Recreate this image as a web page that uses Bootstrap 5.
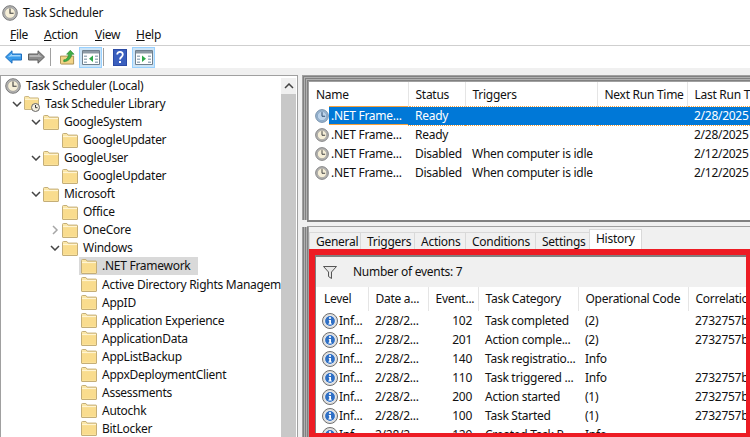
<!doctype html>
<html lang="en"><head><meta charset="utf-8"><title>Task Scheduler</title>
<link rel="stylesheet" href="https://cdn.jsdelivr.net/npm/bootstrap@5.3.0/dist/css/bootstrap.min.css">
<style>
html,body{height:437px;width:750px;overflow:hidden;margin:0}
body{font:12px/18px "Noto Sans","Open Sans",sans-serif;letter-spacing:-.27px;color:#111;background:#fff}
.ttl{height:23px;padding:2px 0 0 2px;gap:5px}
.mnu{height:23px;padding:2px 0 0 10px;border-bottom:1px solid #cfcfcf}
.mi1{width:34px}.mi2{width:51px}.mi3{width:41px}
.tbar{height:22px;padding-left:5px;background:#fff}
.tfwd{margin-left:6px}.ts1{margin-left:5px}.tup{margin-left:9px}.tb1{margin-left:4px}.ts2{margin-left:1px}.thelp{margin-left:9px}.tb2{margin-left:5px}
.tbtn{width:23px;height:21px;background:#cce4f7;border:1px solid #99d1ff}
.tsep{width:1px;height:18px;background:#a0a0a0}
.band{height:7px;background:#f0f0f0}
.mainrow{height:362px;background:#f0f0f0}
.tree{width:298px;height:362px;border:1px solid #a0a0a0;border-width:1px 1px 0 1px;background:#fff}
.treebody{width:280px;overflow:hidden;height:361px;padding-top:1px}
.tr{height:18.05px;white-space:nowrap}
.tr svg{flex:none}
.chev{width:10px;flex:none;margin-right:2px}
.l0{padding-left:4px}.l1{padding-left:11px}.l2{padding-left:30px}.l3{padding-left:49px}.l3n{padding-left:61px}.l4{padding-left:80px}
.lbl{padding-left:5px}
.sel{background:#d9d9d9;margin-left:-2px;padding:0 7px 0 2px;display:flex;align-items:center;height:18px}
.sbar{width:15px;background:#c8c8c8;margin-top:2px;height:360px}
.sup{height:16px;background:#f0f0f0}
.rpane{margin-left:4px;flex:1;min-width:0;height:362px}
.stripes{box-shadow:inset 1px 1px 0 #a0a0a0,inset 2px 2px 0 #808080,inset 3px 3px 0 #b0b0b0,inset 4px 4px 0 #808080,inset 5px 5px 0 #b0b0b0,inset 6px 6px 0 #808080,inset 7px 7px 0 #a0a0a0}
.up{height:145px;padding:7px 0 0 7px;background:#fff;overflow:hidden}
.split{height:7px;background:#f0f0f0;border-top:2px solid #808080;border-bottom:1px solid #a0a0a0;margin-left:5px}
.low{height:210px;padding:0 0 0 7px;background-color:#f0f0f0}
.stripesv{box-shadow:inset 1px 0 0 #a0a0a0,inset 2px 0 0 #808080,inset 3px 0 0 #b0b0b0,inset 4px 0 0 #808080,inset 5px 0 0 #b0b0b0,inset 6px 0 0 #808080,inset 7px 0 0 #a0a0a0}
.tabsx{height:22px;padding-left:1px;border:0;align-items:flex-end;flex-wrap:nowrap}
.tabx{height:17px;border:1px solid #d9d9d9;border-bottom:0;line-height:17px;padding-left:6px;background:#f0f0f0;margin-left:-1px;flex:none;overflow:hidden;white-space:nowrap}
.tabx.on{height:20px;background:#fff;line-height:17px}
.tw1{width:52px}.tw2{width:55px}.tw3{width:52px}.tw4{width:71px}.tw5{width:55px}.tw6{width:53px}
.redbox{border:solid #ed1c24;border-width:6px 4px 4px 6px;height:188px;overflow:hidden;background:#fff}
.fbar{height:32px;background:#f0f0f0;border-top:2px solid #808080;border-left:1px solid #808080;padding-left:7px}
.flt{margin-right:16px}
.lv{table-layout:fixed;border-collapse:collapse;margin:0;--bs-table-bg:transparent}
.lv1{width:441px}.lv2{width:432px}
.lv td,.lv th{padding:0;font-weight:400;white-space:nowrap;overflow:hidden;border:0;color:#111;vertical-align:middle;box-shadow:none}
.up .lv th{height:24px;line-height:16px;padding:2px 0 0 7px;border-right:1px solid #e5e5e5}
.up .lv td{height:19px;line-height:16px;padding:0 0 0 7px}
.up .lv tr.hi td:not(:first-child){background:#0078d7;color:#fff;border-top:1px dotted #f7a13c;border-bottom:1px dotted #f7a13c}
.up .lv td:first-child{padding:0 0 0 6px}
.up .lv tr.hi td:nth-child(1) .nm{background:#0078d7;color:#fff;box-shadow:0 1px 0 #f7a13c,0 -1px 0 #f7a13c}
.nm{display:flex;align-items:center;height:17px;padding:0 0 0 2px;flex:1}
.nmw{display:flex;align-items:center}
.low .lv th{height:24px;padding-left:7px;border-right:1px solid #e5e5e5}
.low .lv th:first-child{padding-left:8px}
.low .lv td{height:19px;padding-left:7px}
.low .lv td:first-child{padding-left:0}
.lvw{border-left:1px solid #808080;height:146px;overflow:hidden}
.inf{display:flex;align-items:center;padding-left:6px;gap:1px}
.num{text-align:right;padding-right:6px!important}
</style></head><body class="d-flex flex-column">
<svg width="0" height="0" class="position-absolute">
<defs>
<symbol id="clk" viewBox="0 0 16 16"><circle cx="8" cy="8" r="7.3" fill="#b5b5b5" stroke="#6f6f6f" stroke-width=".9"/><circle cx="8" cy="8" r="5.3" fill="#f6efd8" stroke="#8d8d8d" stroke-width=".6"/><path d="M8 3.6V8.3H11.6" fill="none" stroke="#3c3c3c" stroke-width="1.1"/></symbol>
<symbol id="clkb" viewBox="0 0 16 16"><circle cx="8" cy="8" r="7.3" fill="#9db8d2" stroke="#5f7d9c" stroke-width=".9"/><circle cx="8" cy="8" r="5.3" fill="#bcd3ea" stroke="#6f8fb0" stroke-width=".6"/><path d="M8 3.6V8.3H11.6" fill="none" stroke="#2a4a6c" stroke-width="1.1"/></symbol>
<symbol id="fld" viewBox="0 0 16 15"><path d="M.5 3V1.5a1 1 0 0 1 1-1h3.4l1.2 1.6H15a.5.5 0 0 1 .5.5v11.4a.5.5 0 0 1-.5.5H1a.5.5 0 0 1-.5-.5Z" fill="#fbe7a8" stroke="#c4ae78"/><path d="M1 4H15V13.5H1Z" fill="#f9dc8e"/><path d="M1 3.6H15" stroke="#fff6d8"/></symbol>
<symbol id="inf" viewBox="0 0 16 16"><circle cx="8" cy="8" r="7.5" fill="#ececec" stroke="#4a4a4a" stroke-width=".8"/><circle cx="8" cy="8" r="6.2" fill="#fafafa" stroke="#b8b8b8" stroke-width=".6"/><circle cx="8" cy="8" r="4.9" fill="#2f6fc4"/><circle cx="8" cy="5" r="1.1" fill="#fff"/><path d="M6.8 7H9V10.6H9.8V11.6H6.4V10.6H7.2V8H6.8Z" fill="#fff"/></symbol>
<symbol id="dn" viewBox="0 0 10 6"><path d="M1 1 5 5 9 1" fill="none" stroke="#444" stroke-width="1.5"/></symbol>
</defs></svg>

<div class="ttl d-flex align-items-center"><svg width="16" height="16"><use href="#clk"/></svg><span>Task Scheduler</span></div>
<div class="mnu d-flex align-items-center"><span class="mi1"><u>F</u>ile</span><span class="mi2"><u>A</u>ction</span><span class="mi3"><u>V</u>iew</span><span><u>H</u>elp</span></div>
<div class="tbar d-flex align-items-center">
<svg width="17" height="14" viewBox="0 0 17 14"><path d="M.5 7 7 .8V4H16.5V10H7V13.2Z" fill="#3a9bea" stroke="#1c6fc0"/><path d="M3 7 7 3.5V5H15.5V6.5H6.5Z" fill="#9fd4fb"/></svg>
<svg width="17" height="14" viewBox="0 0 17 14" class="tfwd"><path d="M16.5 7 10 .8V4H.5V10H10V13.2Z" fill="#8c8c8c" stroke="#5f5f5f"/><path d="M1.5 5H10V3.5L14 7H1.5Z" fill="#b5b5b5"/></svg>
<span class="tsep ts1"></span>
<svg width="15" height="17" viewBox="0 0 16 17" class="tup"><path d="M.5 7H14.5V15.5H1.5L.5 15Z" fill="#f2d486" stroke="#a98f52"/><path d="M4 11C7 11 9 8 9 5H7L11 .8 15 5H12.6C12 9 9 13 4 13Z" fill="#3fae45" stroke="#26812c" stroke-width=".6"/></svg>
<span class="tbtn d-flex align-items-center justify-content-center tb1"><svg width="18" height="15" viewBox="0 0 18 15"><path d="M.5.5H17.5V14.5H.5Z" fill="#fff" stroke="#6f7f8c"/><path d="M1 1H17V3.5H1Z" fill="#8d9aa5"/><path d="M2 5.5H5V7H2ZM2 8.5H5V10H2ZM2 11.5H5V13H2ZM13 5.5H16V7H13ZM13 8.5H16V10H13ZM13 11.5H16V13H13Z" fill="#9fb1bf"/><path d="M11 5.5V12L7 8.7Z" fill="#2fa84a"/></svg></span>
<span class="tsep ts2"></span>
<svg width="14" height="17" viewBox="0 0 14 17" class="thelp"><path d="M0 0H14V17H0Z" fill="#2b4aa5"/><path d="M1 1H13V16H1Z" fill="#3a5fbe"/><path d="M4.2 5.5C4.2 2 9.8 2 9.8 5.5 9.8 8 7 8 7 10.5" fill="none" stroke="#fff" stroke-width="1.8"/><path d="M6 12H8V14H6Z" fill="#fff"/></svg>
<span class="tbtn d-flex align-items-center justify-content-center tb2"><svg width="18" height="15" viewBox="0 0 18 15"><path d="M.5.5H17.5V14.5H.5Z" fill="#fff" stroke="#6f7f8c"/><path d="M1 1H17V3.5H1Z" fill="#8d9aa5"/><path d="M2 5.5H5V7H2ZM2 8.5H5V10H2ZM2 11.5H5V13H2ZM13 5.5H16V7H13ZM13 8.5H16V10H13ZM13 11.5H16V13H13Z" fill="#9fb1bf"/><path d="M7 5.5V12L11 8.7Z" fill="#2fa84a"/></svg></span>
</div>
<div class="band"></div>
<div class="mainrow d-flex">
<div class="tree d-flex">
<div class="treebody">
<div class="tr d-flex align-items-center l0"><svg width="16" height="16"><use href="#clk"/></svg><span class="lbl">Task Scheduler (Local)</span></div>
<div class="tr d-flex align-items-center l1"><svg class="chev" width="10" height="6"><use href="#dn"/></svg><svg width="16" height="16" viewBox="0 0 16 16"><use href="#fld" width="15" height="14"/><circle cx="11.5" cy="11.5" r="4" fill="#f4efe0" stroke="#666"/><path d="M11.5 9V11.7H13.5" fill="none" stroke="#333"/></svg><span class="lbl">Task Scheduler Library</span></div>
<div class="tr d-flex align-items-center l2"><svg class="chev" width="10" height="6"><use href="#dn"/></svg><svg width="16" height="15"><use href="#fld"/></svg><span class="lbl">GoogleSystem</span></div>
<div class="tr d-flex align-items-center l3n"><svg width="16" height="15"><use href="#fld"/></svg><span class="lbl">GoogleUpdater</span></div>
<div class="tr d-flex align-items-center l2"><svg class="chev" width="10" height="6"><use href="#dn"/></svg><svg width="16" height="15"><use href="#fld"/></svg><span class="lbl">GoogleUser</span></div>
<div class="tr d-flex align-items-center l3n"><svg width="16" height="15"><use href="#fld"/></svg><span class="lbl">GoogleUpdater</span></div>
<div class="tr d-flex align-items-center l2"><svg class="chev" width="10" height="6"><use href="#dn"/></svg><svg width="16" height="15"><use href="#fld"/></svg><span class="lbl">Microsoft</span></div>
<div class="tr d-flex align-items-center l3n"><svg width="16" height="15"><use href="#fld"/></svg><span class="lbl">Office</span></div>
<div class="tr d-flex align-items-center l3"><svg class="chev" width="10" height="10" viewBox="0 0 10 10"><path d="M3 1 7 5 3 9" fill="none" stroke="#a6a6a6" stroke-width="1.5"/></svg><svg width="16" height="15"><use href="#fld"/></svg><span class="lbl">OneCore</span></div>
<div class="tr d-flex align-items-center l3"><svg class="chev" width="10" height="6"><use href="#dn"/></svg><svg width="16" height="15"><use href="#fld"/></svg><span class="lbl">Windows</span></div>
<div class="tr d-flex align-items-center l4"><span class="sel"><svg width="16" height="15"><use href="#fld"/></svg><span class="lbl">.NET Framework</span></span></div>
<div class="tr d-flex align-items-center l4"><svg width="16" height="15"><use href="#fld"/></svg><span class="lbl">Active Directory Rights Managem</span></div>
<div class="tr d-flex align-items-center l4"><svg width="16" height="15"><use href="#fld"/></svg><span class="lbl">AppID</span></div>
<div class="tr d-flex align-items-center l4"><svg width="16" height="15"><use href="#fld"/></svg><span class="lbl">Application Experience</span></div>
<div class="tr d-flex align-items-center l4"><svg width="16" height="15"><use href="#fld"/></svg><span class="lbl">ApplicationData</span></div>
<div class="tr d-flex align-items-center l4"><svg width="16" height="15"><use href="#fld"/></svg><span class="lbl">AppListBackup</span></div>
<div class="tr d-flex align-items-center l4"><svg width="16" height="15"><use href="#fld"/></svg><span class="lbl">AppxDeploymentClient</span></div>
<div class="tr d-flex align-items-center l4"><svg width="16" height="15"><use href="#fld"/></svg><span class="lbl">Assessments</span></div>
<div class="tr d-flex align-items-center l4"><svg width="16" height="15"><use href="#fld"/></svg><span class="lbl">Autochk</span></div>
<div class="tr d-flex align-items-center l4"><svg width="16" height="15"><use href="#fld"/></svg><span class="lbl">BitLocker</span></div>
</div>
<div class="sbar"><div class="sup d-flex align-items-center justify-content-center"><svg width="10" height="6" viewBox="0 0 10 6"><path d="M1 5 5 1 9 5" fill="none" stroke="#444" stroke-width="1.5"/></svg></div></div>
</div>
<div class="rpane d-flex flex-column">
<div class="up stripes">
<table class="table lv lv1">
<colgroup><col style="width:99px"><col style="width:57px"><col style="width:132px"><col style="width:90px"><col style="width:63px"></colgroup>
<thead><tr><th>Name</th><th>Status</th><th>Triggers</th><th>Next Run Time</th><th>Last Run Ti</th></tr></thead>
<tbody>
<tr class="hi"><td><span class="nmw"><svg width="14" height="14"><use href="#clkb"/></svg><span class="nm">.NET Frame...</span></span></td><td>Ready</td><td></td><td></td><td>2/28/2025 7</td></tr>
<tr><td><span class="nmw"><svg width="14" height="14"><use href="#clk"/></svg><span class="nm">.NET Frame...</span></span></td><td>Ready</td><td></td><td></td><td>2/28/2025 7</td></tr>
<tr><td><span class="nmw"><svg width="14" height="14"><use href="#clk"/></svg><span class="nm">.NET Frame...</span></span></td><td>Disabled</td><td>When computer is idle</td><td></td><td>2/12/2025 9</td></tr>
<tr><td><span class="nmw"><svg width="14" height="14"><use href="#clk"/></svg><span class="nm">.NET Frame...</span></span></td><td>Disabled</td><td>When computer is idle</td><td></td><td>2/12/2025 9</td></tr>
</tbody></table>
</div>
<div class="split"></div>
<div class="low stripesv">
<div class="nav tabsx d-flex">
<div class="tabx tw1">General</div><div class="tabx tw2">Triggers</div><div class="tabx tw3">Actions</div><div class="tabx tw4">Conditions</div><div class="tabx tw5">Settings</div><div class="tabx tw6 on">History</div>
</div>
<div class="redbox">
<div class="fbar d-flex align-items-center"><svg class="flt" width="14" height="13" viewBox="0 0 14 13"><path d="M.5.5H13.5L8.5 6V12.5L5.5 10.5V6Z" fill="#e6e6e6" stroke="#555"/></svg><span>Number of events: 7</span></div>
<div class="lvw">
<table class="table lv lv2">
<colgroup><col style="width:52px"><col style="width:60px"><col style="width:50px"><col style="width:100px"><col style="width:110px"><col style="width:60px"></colgroup>
<thead><tr><th>Level</th><th>Date a...</th><th>Event...</th><th>Task Category</th><th>Operational Code</th><th>Correlation</th></tr></thead>
<tbody>
<tr><td><span class="inf"><svg width="16" height="16"><use href="#inf"/></svg>Inf...</span></td><td>2/28/2...</td><td class="num">102</td><td>Task completed</td><td>(2)</td><td>2732757b-</td></tr>
<tr><td><span class="inf"><svg width="16" height="16"><use href="#inf"/></svg>Inf...</span></td><td>2/28/2...</td><td class="num">201</td><td>Action comple...</td><td>(2)</td><td>2732757b-</td></tr>
<tr><td><span class="inf"><svg width="16" height="16"><use href="#inf"/></svg>Inf...</span></td><td>2/28/2...</td><td class="num">140</td><td>Task registratio...</td><td>Info</td><td></td></tr>
<tr><td><span class="inf"><svg width="16" height="16"><use href="#inf"/></svg>Inf...</span></td><td>2/28/2...</td><td class="num">110</td><td>Task triggered ...</td><td>Info</td><td>2732757b-</td></tr>
<tr><td><span class="inf"><svg width="16" height="16"><use href="#inf"/></svg>Inf...</span></td><td>2/28/2...</td><td class="num">200</td><td>Action started</td><td>(1)</td><td>2732757b-</td></tr>
<tr><td><span class="inf"><svg width="16" height="16"><use href="#inf"/></svg>Inf...</span></td><td>2/28/2...</td><td class="num">100</td><td>Task Started</td><td>(1)</td><td>2732757b-</td></tr>
<tr><td><span class="inf"><svg width="16" height="16"><use href="#inf"/></svg>Inf...</span></td><td>2/28/2...</td><td class="num">129</td><td>Created Task P...</td><td>Info</td><td></td></tr>
</tbody></table>
</div>
</div>
</div>
</div>
</div>
</body></html>
